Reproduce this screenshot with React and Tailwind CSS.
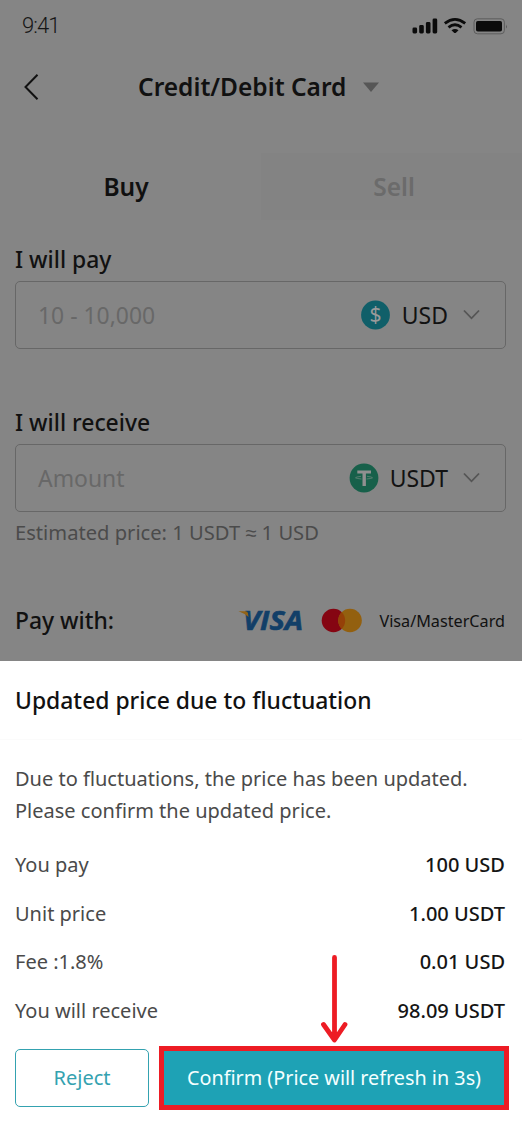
import React from "react";

function StatusBar() {
  return (
    <div className="flex h-[52px] items-center justify-between pl-[22px] pr-[14px]">
      <span className="font-['Roboto'] text-[22px] font-light leading-none tracking-[-0.9px] text-[#161616]">9:41</span>
      <svg width="98" height="20" viewBox="0 0 98 20" className="shrink-0">
        <g fill="#0b0b0b">
          <rect x="2.5" y="11.5" width="4.6" height="6" rx="1.4" />
          <rect x="9.2" y="9" width="4.6" height="8.5" rx="1.4" />
          <rect x="15.9" y="6" width="4.6" height="11.5" rx="1.4" />
          <rect x="22.6" y="2.5" width="4.6" height="15" rx="1.4" />
          <path d="M41.5 14.2 Q45 12 48.5 14.2 L46.2 16.4 Q45 17.5 43.8 16.4 Z" />
          <rect x="66" y="5" width="26" height="10.5" rx="1.8" />
          <path d="M96 8.5 v4 q1.6-2 0-4" fill="#555" />
        </g>
        <g fill="none" stroke="#0b0b0b" strokeWidth="2.8">
          <path d="M34.8 7.4 Q45 -0.6 55.2 7.4" />
          <path d="M38.5 11.4 Q45 6.2 51.5 11.4" />
        </g>
        <rect x="64" y="2.8" width="30.4" height="15" rx="3.4" fill="none" stroke="#5d5d5d" />
      </svg>
    </div>
  );
}

function Chevron() {
  return (
    <svg width="18" height="12" viewBox="0 0 18 12" className="ml-[15px]">
      <path d="M1 1.5 L8.5 9.3 L16 1.5" fill="none" stroke="#555" strokeWidth="1.8" />
    </svg>
  );
}

function UsdIcon() {
  return (
    <svg width="30" height="30" viewBox="0 0 30 30">
      <circle cx="14.5" cy="15" r="14.4" fill="#105f69" />
      <text x="14.5" y="22" textAnchor="middle" fontFamily="Noto Sans, sans-serif" fontSize="21" fill="#9a9a9a">$</text>
    </svg>
  );
}

function UsdtIcon() {
  return (
    <svg width="30" height="30" viewBox="0 0 30 30">
      <circle cx="15" cy="15" r="14.4" fill="#17604a" />
      <path d="M8.3 7.4 H22 V10.6 H16.9 V23 H13.5 V10.6 H8.3 Z" fill="#909090" />
      <path d="M12 13.3 Q6.5 14 6.5 14.8 Q7 15.5 12.5 16 M18 13.3 Q23.5 14 23.5 14.8 Q23 15.5 17.5 16" fill="none" stroke="#6f897e" strokeWidth="0.7" />
    </svg>
  );
}

function Field({ placeholder, icon, currency }) {
  return (
    <div className="ml-[15px] mr-[16px] flex h-[68px] items-center rounded-[5px] border border-[#676767] pl-[22px] pr-[24px]">
      <span className="flex-1 whitespace-nowrap pt-[2px] text-[22.900px] leading-none text-[#686868]">{placeholder}</span>
      {icon}
      <span className="ml-[11px] text-[23px] leading-none text-[#121212]">{currency}</span>
      <Chevron />
    </div>
  );
}

function PaymentLogos() {
  return (
    <svg width="124" height="40" viewBox="0 -6 124 40" className="shrink-0">
      <text x="5" y="22.8" textLength="60" lengthAdjust="spacingAndGlyphs" fontFamily="Open Sans, sans-serif" fontWeight="700" fontStyle="italic" fontSize="26" fill="#123f68" stroke="#123f68" strokeWidth="0.6">VISA</text>
      <path d="M0.5 4.2 H7.5 Q9.5 4.2 10 6.2 L10.5 10 Q7 6.5 0.5 4.2 Z" fill="#926316" />
      <circle cx="95.5" cy="13.5" r="11.8" fill="#850512" />
      <circle cx="112" cy="13.5" r="11.8" fill="#93600f" />
      <path d="M103.75 5.2 A11.8 11.8 0 0 1 103.75 21.8 A11.8 11.8 0 0 1 103.75 5.2 Z" fill="#954008" />
    </svg>
  );
}

const rows = [
  ["You pay", "100 USD"],
  ["Unit price", "1.00 USDT"],
  ["Fee :1.8%", "0.01 USD"],
  ["You will receive", "98.09 USDT"],
];

export default function App() {
  return (
    <div className="relative flex h-[1130px] w-[522px] flex-col overflow-hidden bg-[#858585] font-['Noto_Sans',sans-serif]">
      <StatusBar />
      <header className="flex h-[70px] items-center pl-[23px]">
        <svg width="17" height="28" viewBox="0 0 17 28">
          <path d="M14.5 1.8 L2.5 14 L14.5 26.2" fill="none" stroke="#111" strokeWidth="2" />
        </svg>
        <h1 className="ml-[98px] whitespace-nowrap text-[24.500px] font-semibold leading-none text-[#111]">Credit/Debit Card</h1>
        <svg width="18" height="11" viewBox="0 0 18 11" className="ml-[16px]">
          <path d="M1 0.5 H17 L9 10 Z" fill="#565656" />
        </svg>
      </header>
      <div className="mt-[31px] grid h-[67px] grid-cols-2 text-center text-[24.500px] font-semibold leading-[67px]">
        <div className="pr-[9px] text-[#101010]">Buy</div>
        <div className="bg-[#838383] pl-[5px] text-[#6b6b6b]">Sell</div>
      </div>
      <div className="mt-[19px] flex h-[42px] items-center pl-[15px] text-[22.900px] font-medium text-[#111]">I will pay</div>
      <Field placeholder="10 - 10,000" icon={<UsdIcon />} currency="USD" />
      <div className="mt-[53px] flex h-[42px] items-center pl-[15px] text-[22.900px] font-medium text-[#111]">I will receive</div>
      <Field placeholder="Amount" icon={<UsdtIcon />} currency="USDT" />
      <div className="mb-px flex h-[40px] items-center pl-[15px] text-[20.150px] text-[#4b4b4b]">Estimated price: 1 USDT ≈ 1 USD</div>
      <div className="mt-[48px] flex h-[40px] items-center pl-[15px] pr-[17px]">
        <span className="flex-1 text-[22.900px] font-medium text-[#111]">Pay with:</span>
        <PaymentLogos />
        <span className="ml-[17px] whitespace-nowrap text-[16.200px] text-[#111]">Visa/MasterCard</span>
      </div>

      <section className="mt-auto h-[469px] bg-white">
        <h2 className="flex h-[79px] items-center border-b border-[#fbfbfb] pl-[15px] pt-[2px] text-[22.900px] font-medium text-[#111]">Updated price due to fluctuation</h2>
        <p className="mt-[23px] pl-[15px] text-[20px] leading-[31.500px] text-[#4a4a4a]">
          Due to fluctuations, the price has been updated.
          <br />
          Please confirm the updated price.
        </p>
        <dl className="mt-[15px] px-[15px] text-[20px] leading-[48.670px]">
          {rows.map(([label, value]) => (
            <div key={label} className="flex justify-between pr-[2px]">
              <dt className="text-[#4a4a4a]">{label}</dt>
              <dd className="font-medium text-[#151515]">{value}</dd>
            </div>
          ))}
        </dl>
        <div className="mt-[10px] flex items-center gap-[10px] pl-[15px] text-[20px]">
          <button className="h-[58px] w-[134px] rounded-[5px] border-[1.500px] border-[#34a2b0] text-[#34a2b0]">Reject</button>
          <button className="h-[64px] w-[350px] whitespace-nowrap border-[5px] border-[#ed1c24] bg-[#1ea2b5] text-[19.800px] text-[#f4ffff]">Confirm (Price will refresh in 3s)</button>
        </div>
      </section>
      <svg width="30" height="92" viewBox="0 0 30 92" className="pointer-events-none absolute left-[320px] top-[953px]">
        <path d="M14.5 4.5 V84 M3.5 71.5 L14.5 87 L25 71.5" fill="none" stroke="#ed1c24" strokeWidth="4.8" strokeLinecap="round" strokeLinejoin="round" />
      </svg>
    </div>
  );
}
